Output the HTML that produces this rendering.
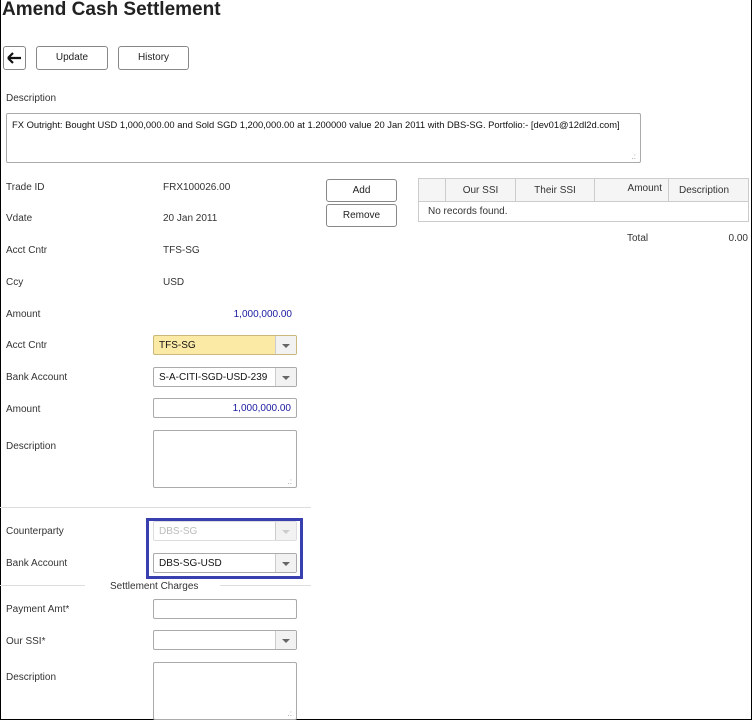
<!DOCTYPE html>
<html><head><style>
body{margin:0;width:754px;height:723px;overflow:hidden;background:#fff;font-family:"Liberation Sans",Arial,sans-serif;font-size:10px;color:#333}
#f{position:absolute;left:0;top:0;width:750px;height:719px;border:1px solid #000;border-top:none}
.a{position:absolute;white-space:nowrap}
.btn{position:absolute;border:1px solid #888;border-radius:3px;background:#fff;text-align:center;box-sizing:border-box;font-size:10px;color:#222}
.in{position:absolute;border:1px solid #aaa;border-radius:2px;background:#fff;box-sizing:border-box;left:153px;width:144px;height:20px;padding:4px 5px;font-size:10px;color:#111}
.dd:after{content:"";position:absolute;right:0;top:0;width:20px;height:18px;border-left:1px solid #ccc;background:#f2f2f2}
.dd i{position:absolute;right:6px;top:8px;width:0;height:0;border-left:4px solid transparent;border-right:4px solid transparent;border-top:4px solid #666;z-index:2}
.ta{height:58px}
.ta:after,.big:after{content:".:";position:absolute;right:4px;bottom:1px;font-size:8px;color:#999}
.hr{position:absolute;height:1px;background:#ddd}
th,td{font-weight:normal;font-size:10px;color:#333}
</style></head><body>
<div id="f"></div>
<div class="a" style="left:2px;top:-1px;font-size:19px;font-weight:bold;color:#222">Amend Cash Settlement</div>
<div class="btn" style="left:3px;top:46px;width:23px;height:24px"><svg width="21" height="22" viewBox="0 0 21 22"><path d="M4 11H17M4 11L9 6M4 11L9 16" stroke="#111" stroke-width="2.2" fill="none"/></svg></div>
<div class="btn" style="left:36px;top:46px;width:72px;height:24px;line-height:22px">Update</div>
<div class="btn" style="left:118px;top:46px;width:71px;height:24px;line-height:22px">History</div>
<div class="a" style="left:6px;top:93px">Description</div>
<div class="in big" style="left:6px;top:113px;width:635px;height:50px;padding:5px 5px;font-size:9.4px;white-space:nowrap">FX Outright: Bought USD 1,000,000.00 and Sold SGD 1,200,000.00 at 1.200000 value 20 Jan 2011 with DBS-SG. Portfolio:- [dev01@12dl2d.com]</div>
<div class="a" style="left:6px;top:182px">Trade ID</div><div class="a" style="left:163px;top:182px">FRX100026.00</div>
<div class="a" style="left:6px;top:213px">Vdate</div><div class="a" style="left:163px;top:213px">20 Jan 2011</div>
<div class="a" style="left:6px;top:245px">Acct Cntr</div><div class="a" style="left:163px;top:245px">TFS-SG</div>
<div class="a" style="left:6px;top:277px">Ccy</div><div class="a" style="left:163px;top:277px">USD</div>
<div class="a" style="left:6px;top:309px">Amount</div><div class="a" style="left:192px;top:309px;width:100px;text-align:right;color:#1a1aa0">1,000,000.00</div>
<div class="a" style="left:6px;top:340px">Acct Cntr</div><div class="in dd" style="top:335px;background:#fbeaa6;border-color:#c9b87a">TFS-SG<i></i></div>
<div class="a" style="left:6px;top:372px">Bank Account</div><div class="in dd" style="top:367px">S-A-CITI-SGD-USD-239<i></i></div>
<div class="a" style="left:6px;top:404px">Amount</div><div class="in" style="top:398px;text-align:right;color:#1a1aa0">1,000,000.00</div>
<div class="a" style="left:6px;top:441px">Description</div><div class="in ta" style="top:430px"></div>
<div class="hr" style="left:0;top:507px;width:311px"></div>
<div class="a" style="left:146px;top:518px;width:151px;height:55px;border:3px solid #3a3fb0"></div>
<div class="a" style="left:6px;top:526px">Counterparty</div><div class="in dd" style="top:521px;color:#bbb;border-color:#ddd">DBS-SG<i style="border-top-color:#ccc"></i></div>
<div class="a" style="left:6px;top:558px">Bank Account</div><div class="in dd" style="top:553px">DBS-SG-USD<i></i></div>
<div class="hr" style="left:0;top:585px;width:85px"></div><div class="hr" style="left:220px;top:585px;width:91px"></div>
<div class="a" style="left:110px;top:581px">Settlement Charges</div>
<div class="a" style="left:6px;top:604px">Payment Amt*</div><div class="in" style="top:599px"></div>
<div class="a" style="left:6px;top:636px">Our SSI*</div><div class="in dd" style="top:630px"><i></i></div>
<div class="a" style="left:6px;top:672px">Description</div><div class="in ta" style="top:662px"></div>
<div class="btn" style="left:326px;top:179px;width:71px;height:23px;line-height:21px">Add</div>
<div class="btn" style="left:326px;top:204px;width:71px;height:23px;line-height:21px">Remove</div>
<table style="position:absolute;left:418px;top:178px;width:331px;border-collapse:collapse;table-layout:fixed">
<tr style="height:23px;background:#f5f5f5"><th style="width:24px;border:1px solid #ccc"></th><th style="width:67px;border:1px solid #ccc">Our SSI</th><th style="width:76px;border:1px solid #ccc">Their SSI</th><th style="width:67px;border:1px solid #ccc;text-align:right;vertical-align:top;padding:4px 6px 0 0">Amount</th><th style="border:1px solid #ccc;text-align:left;padding-left:10px">Description</th></tr>
<tr style="height:20px"><td colspan="5" style="border:1px solid #ccc;padding-left:9px">No records found.</td></tr>
</table>
<div class="a" style="left:627px;top:233px">Total</div>
<div class="a" style="left:700px;top:233px;width:48px;text-align:right">0.00</div>
</body></html>
